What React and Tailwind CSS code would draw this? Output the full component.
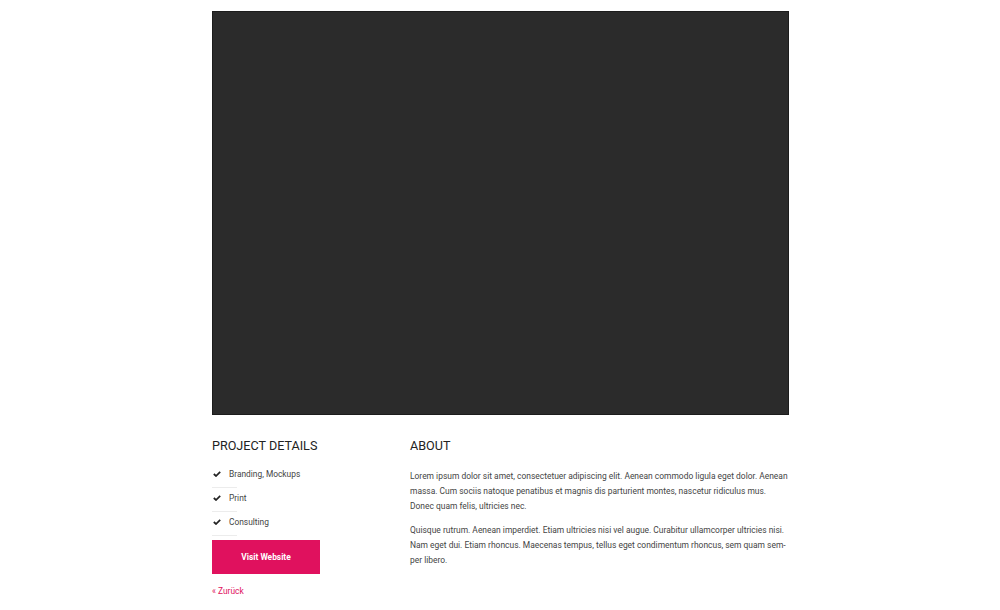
import React from 'react';

const details = ['Branding, Mockups', 'Print', 'Consulting'];

const Check = () => (
  <svg width="8" height="6" viewBox="0 0 8 6" className="shrink-0">
    <path d="M0.8 3 L3 5 L7.2 0.8" fill="none" stroke="#222" strokeWidth="1.7" />
  </svg>
);

export default function App() {
  return (
    <div className="w-[1000px] h-[610px] bg-white font-['Roboto',sans-serif] overflow-hidden">
      <div className="w-[577px] ml-[212px] pt-[11px]">
        <div className="w-full h-[404px] bg-[#2b2b2b] border border-[#1c1c1c]" />

        <div className="flex mt-[22px]">
          <div className="w-[198px] shrink-0">
            <h3 className="text-[12.6px] leading-[18px] text-[#222]">PROJECT DETAILS</h3>
            <ul className="mt-[13px]">
              {details.map((d) => (
                <li key={d} className="h-[24px]">
                  <div className="flex items-center gap-[8px] pl-[1px] h-[12px] text-[8.4px] text-[#444]">
                    <Check />
                    <span>{d}</span>
                  </div>
                  <div className="w-[25px] h-px bg-[#ececec] mt-[7px]" />
                </li>
              ))}
            </ul>
            <button className="block w-[108px] h-[34px] bg-[#e0115e] text-white text-[8.4px] font-bold">
              Visit Website
            </button>
            <div className="mt-[11px] h-[12px] leading-[12px] text-[8.4px] text-[#e0115e]">« Zurück</div>
          </div>

          <div className="flex-1">
            <h3 className="text-[12.6px] leading-[18px] text-[#222]">ABOUT</h3>
            <p className="mt-[14px] text-[8.45px] leading-[15px] text-[#444]">
              Lorem ipsum dolor sit amet, consectetuer adipiscing elit. Aenean commodo ligula eget dolor. Aenean massa. Cum sociis natoque penatibus et magnis dis parturient montes, nascetur ridiculus mus. Donec quam felis, ultricies nec.
            </p>
            <p className="mt-[9px] text-[8.45px] leading-[15px] text-[#444]">
              Quisque rutrum. Aenean imperdiet. Etiam ultricies nisi vel augue. Curabitur ullamcorper ultricies nisi. Nam eget dui. Etiam rhoncus. Maecenas tempus, tellus eget condimentum rhoncus, sem quam sem&shy;per libero.
            </p>
          </div>
        </div>
      </div>
    </div>
  );
}
